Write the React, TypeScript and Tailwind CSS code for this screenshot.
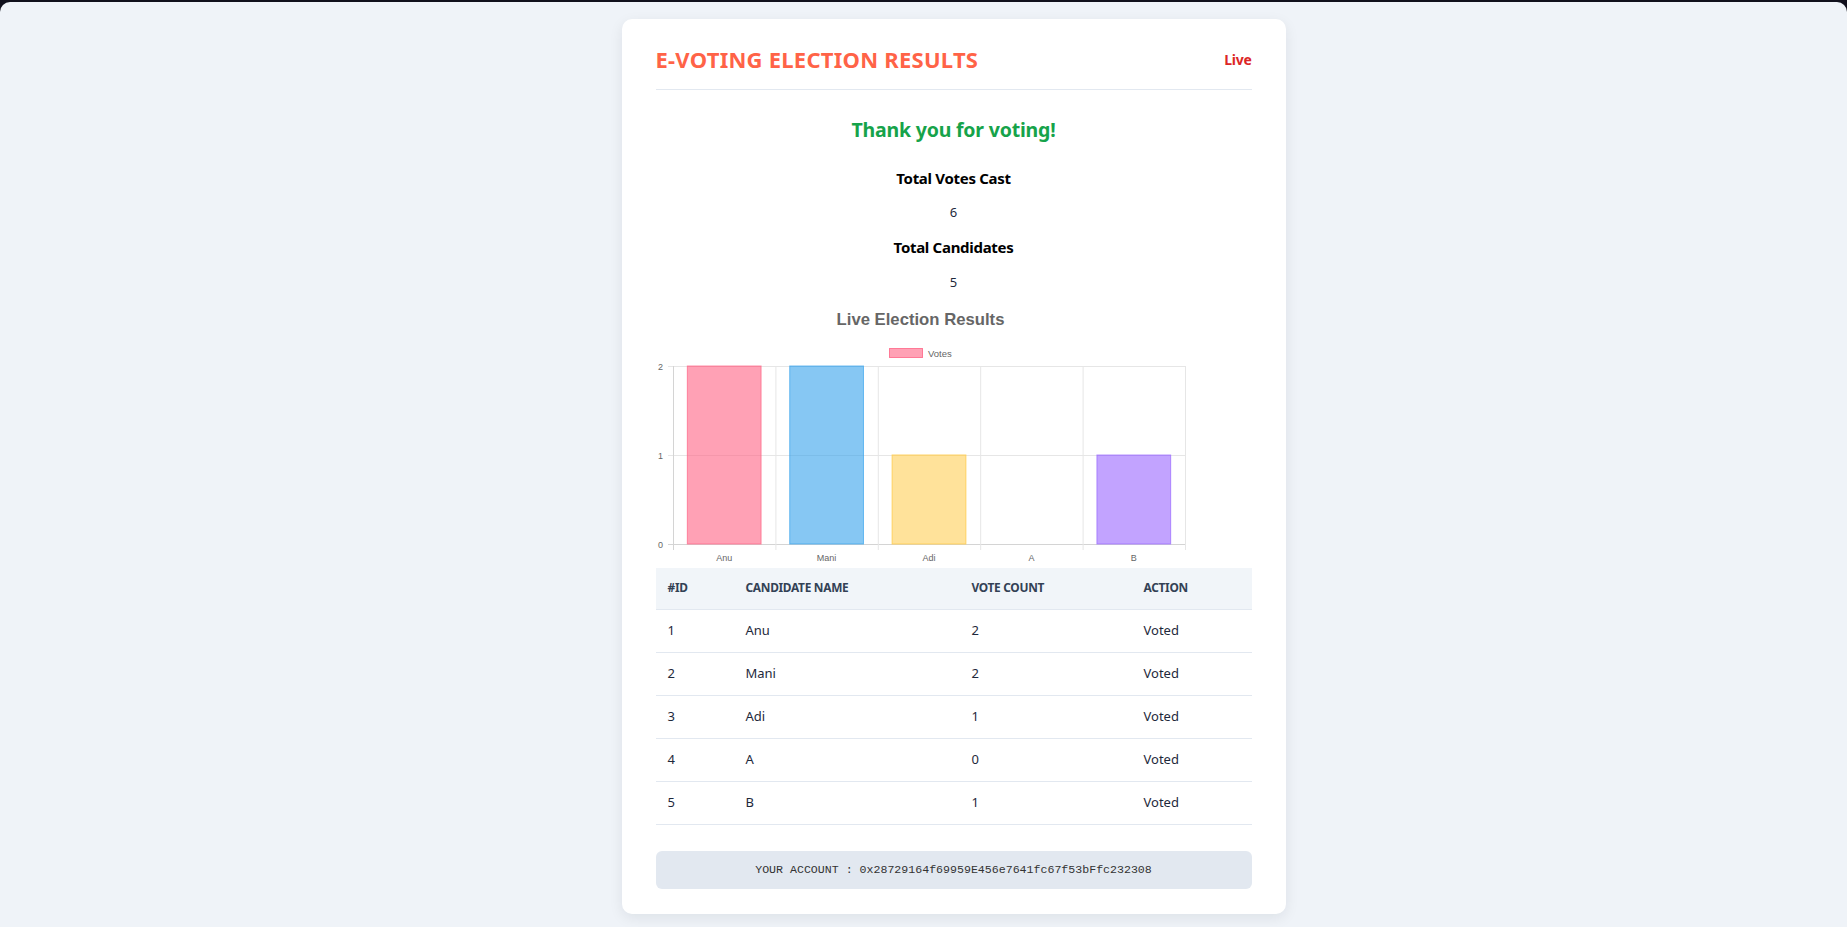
const candidates = [
  { id: 1, name: 'Anu', votes: 2, fill: 'rgba(255,99,132,0.6)', stroke: 'rgba(255,99,132,0.7)' },
  { id: 2, name: 'Mani', votes: 2, fill: 'rgba(54,162,235,0.6)', stroke: 'rgba(54,162,235,0.7)' },
  { id: 3, name: 'Adi', votes: 1, fill: 'rgba(255,206,86,0.6)', stroke: 'rgba(255,206,86,0.9)' },
  { id: 4, name: 'A', votes: 0, fill: 'rgba(75,192,192,0.6)', stroke: 'rgba(75,192,192,0.7)' },
  { id: 5, name: 'B', votes: 1, fill: 'rgba(153,102,255,0.6)', stroke: 'rgba(153,102,255,0.7)' },
];

const account = '0x28729164f69959E456e7641fc67f53bFfc232308';

function VotesChart() {
  // plot area inside the svg
  const left = 17;
  const right = 529;
  const top = 36;
  const bottom = 214;
  const max = 2;
  const col = (right - left) / candidates.length;
  const barW = col * 0.72;
  const yFor = (v: number) => bottom - ((bottom - top) * v) / max;

  return (
    <svg width="595" height="238" className="block" style={{ fontFamily: '"Liberation Sans", Arial, sans-serif' }}>
      {/* legend */}
      <rect x="233.5" y="18.5" width="33" height="9" fill="rgba(255,99,132,0.6)" stroke="rgba(255,99,132,0.8)" />
      <text x="272" y="26.5" fontSize="9.5" fill="#666">Votes</text>

      {/* horizontal grid + y ticks */}
      {[0, 1, 2].map((v) => (
        <g key={v}>
          <line x1={left - 5} x2={right} y1={yFor(v) + 0.5} y2={yFor(v) + 0.5} stroke={v === 0 ? '#d4d4d4' : '#e6e6e6'} />
          <text x="7" y={yFor(v) + 3.5} fontSize="9" fill="#666" textAnchor="end">{v}</text>
        </g>
      ))}

      {/* vertical grid */}
      {candidates.map((_, i) => (
        <line key={i} x1={left + col * i + 0.5} x2={left + col * i + 0.5} y1={top} y2={bottom + 6} stroke={i === 0 ? '#d4d4d4' : '#e6e6e6'} />
      ))}
      <line x1={right + 0.5} x2={right + 0.5} y1={top} y2={bottom + 6} stroke="#e6e6e6" />

      {/* bars */}
      {candidates.map((c, i) => {
        const x = left + col * i + (col - barW) / 2;
        const h = bottom - yFor(c.votes);
        return (
          <g key={c.id}>
            {c.votes > 0 && <rect x={x} y={yFor(c.votes)} width={barW} height={h} fill={c.fill} stroke={c.stroke} strokeWidth="1" />}
            <text x={left + col * i + col / 2} y="231" fontSize="9" fill="#666" textAnchor="middle">{c.name}</text>
          </g>
        );
      })}
    </svg>
  );
}

export default function App() {
  return (
    <div className="min-h-screen bg-[#10101c] pt-[2px]" style={{ fontFamily: '"Noto Sans", "Open Sans", sans-serif' }}>
      <div className="min-h-[925px] rounded-t-[10px] bg-[#eff3f8] pt-[17px] pb-[12px] pl-[60px]">
        <div className="mx-auto w-[664px] rounded-[10px] bg-white px-[34px] pt-[24px] pb-[25px] shadow-[0_4px_14px_rgba(15,23,42,0.08)]">
          {/* Header */}
          <div className="flex items-center justify-between border-b border-[#e2e8f0] pb-[14px]">
            <h1 className="text-[22px] leading-[32px] font-bold tracking-[0.25px] text-[#ff6347]">E-VOTING ELECTION RESULTS</h1>
            <span className="text-[14px] font-bold tracking-[-0.3px] text-[#dc2626]">Live</span>
          </div>

          {/* Summary */}
          <div className="pt-[26px] text-center">
            <h2 className="text-[19.5px] leading-[28px] font-bold tracking-[-0.2px] text-[#16a34a]">Thank you for voting!</h2>
            <div className="mt-[17px] flex flex-col">
              <h3 className="h-[34px] text-[15px] leading-[34px] font-bold tracking-[-0.3px] text-black">Total Votes Cast</h3>
              <p className="h-[35px] text-[13px] leading-[35px] text-[#1e293b]">6</p>
              <h3 className="h-[35px] text-[15px] leading-[35px] font-bold tracking-[-0.3px] text-black">Total Candidates</h3>
              <p className="h-[35px] text-[13px] leading-[35px] text-[#1e293b]">5</p>
            </div>
          </div>

          {/* Chart */}
          <div className="mt-[10px]">
            <p className="w-[530px] text-center text-[16.7px] leading-[20px] font-bold text-[#666]" style={{ fontFamily: '"Liberation Sans", Arial, sans-serif' }}>
              Live Election Results
            </p>
            <VotesChart />
          </div>

          {/* Table */}
          <table className="w-full border-collapse text-left text-[13px]">
            <thead>
              <tr className="h-[41px] border-b border-[#e2e8f0] bg-[#f1f5f9] text-[11.9px] font-bold tracking-[-0.3px] text-[#334155]">
                <th className="w-[78px] pl-[12px]">#ID</th>
                <th className="w-[226px] pl-[12px]">CANDIDATE NAME</th>
                <th className="w-[172px] pl-[12px]">VOTE COUNT</th>
                <th className="pl-[12px]">ACTION</th>
              </tr>
            </thead>
            <tbody className="text-[#1e293b]">
              {candidates.map((c) => (
                <tr key={c.id} className="h-[43px] border-b border-[#e2e8f0]">
                  <td className="pl-[12px]">{c.id}</td>
                  <td className="pl-[12px]">{c.name}</td>
                  <td className="pl-[12px]">{c.votes}</td>
                  <td className="pl-[12px]">Voted</td>
                </tr>
              ))}
            </tbody>
          </table>

          {/* Account */}
          <div className="mt-[26px] flex h-[38px] items-center justify-center rounded-[6px] bg-[#e2e8f0] text-[11.6px] text-[#333]" style={{ fontFamily: '"Liberation Mono", "Courier New", monospace' }}>
            YOUR ACCOUNT : {account}
          </div>
        </div>
      </div>
    </div>
  );
}
